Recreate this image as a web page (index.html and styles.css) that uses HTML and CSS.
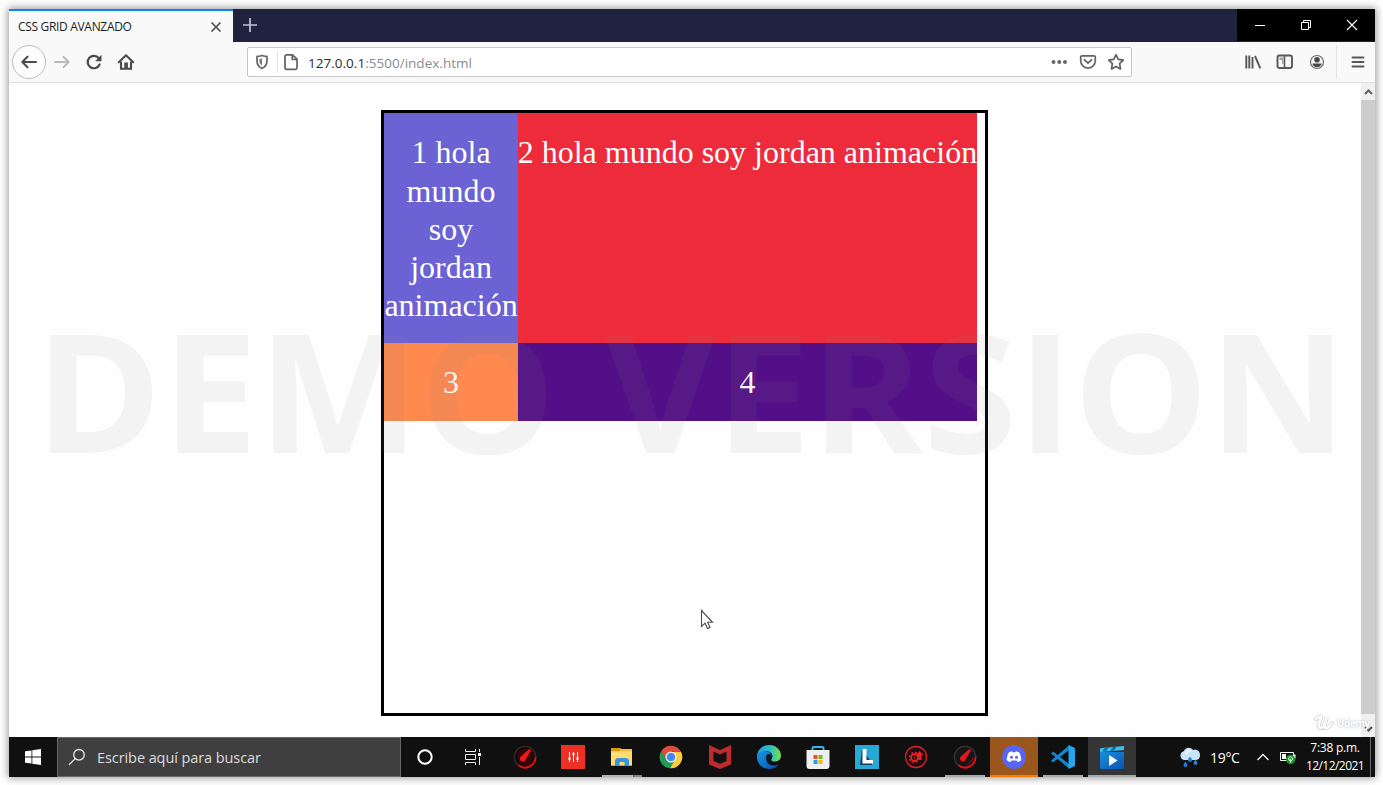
FILE: index.html
```html
<!DOCTYPE html>
<html lang="es">
<head>
<meta charset="utf-8">
<title>CSS GRID AVANZADO</title>
<link rel="stylesheet" href="styles.css">
</head>
<body>
<div class="screen">
  <header class="tabbar">
    <div class="tab">
      <span class="tab-title">CSS GRID AVANZADO</span>
      <svg class="tab-close" width="12" height="12" viewBox="0 0 12 12"><path d="M1.500 1.500l9 9M10.500 1.500l-9 9" stroke="#4a4a4c" stroke-width="1.600" fill="none"/></svg>
    </div>
    <svg class="tab-new" width="16" height="16" viewBox="0 0 16 16"><path d="M8 1v14M1 8h14" stroke="#c4c4d4" stroke-width="1.700"/></svg>
    <div class="controls">
      <svg width="46" height="32" viewBox="0 0 46 32"><path d="M18 16.500h10" stroke="#fff"/></svg>
      <svg width="46" height="32" viewBox="0 0 46 32"><path d="M18.500 13.500h7v7h-7zM20.500 13.500v-2h7v7h-2" stroke="#fff" fill="none"/></svg>
      <svg width="46" height="32" viewBox="0 0 46 32"><path d="M18 11l10 10M28 11l-10 10" stroke="#fff" stroke-width="1.100"/></svg>
    </div>
  </header>

  <nav class="toolbar">
    <div class="nav-buttons">
      <svg width="36" height="36" viewBox="0 0 36 36"><circle cx="18" cy="18" r="16.500" fill="#fdfdfd" stroke="#bdbdbe"/><path d="M25 18H11.500M16.500 12.800L11.300 18l5.200 5.200" fill="none" stroke="#4a4a4e" stroke-width="2" stroke-linecap="round" stroke-linejoin="round"/></svg>
      <svg class="forward" width="18" height="18" viewBox="0 0 18 18"><path d="M2 9h13.500M10.500 3.800L15.700 9l-5.200 5.200" fill="none" stroke="#b9b9bb" stroke-width="1.900" stroke-linecap="round" stroke-linejoin="round"/></svg>
      <svg class="reload" width="18" height="18" viewBox="0 0 18 18"><path d="M13.800 5.200A6.200 6.200 0 1 0 14.600 11.500" fill="none" stroke="#4a4a4e" stroke-width="2.200" stroke-linecap="round"/><path d="M16.500 1.800v6.400H10.100z" fill="#4a4a4e"/></svg>
      <svg class="home" width="18" height="18" viewBox="0 0 18 18"><path d="M1.800 9.200L9 2.200l7.200 7" fill="none" stroke="#4a4a4e" stroke-width="2" stroke-linecap="round" stroke-linejoin="round"/><path d="M4 8.500v7.200h10V8.500" fill="none" stroke="#4a4a4e" stroke-width="2.100"/><path d="M7.300 9.500h3.600V16H7.300z" fill="#4a4a4e"/></svg>
    </div>
    <div class="urlbar">
      <svg class="shield" width="14" height="16" viewBox="0 0 14 16"><path d="M7 1.500c2 .8 3.700 1 5 1v4.200c0 3.800-2 6.300-5 7.600-3-1.300-5-3.800-5-7.600V2.500c1.300 0 3-.2 5-1z" fill="none" stroke="#6a6a6d" stroke-width="1.800" stroke-linejoin="round"/><path d="M7 4.500v7C5.500 10.500 4.500 9 4.500 7V5z" fill="#77777a"/></svg>
      <span class="url-sep"></span>
      <svg class="page-icon" width="14" height="18" viewBox="0 0 14 18"><path d="M3 1.800h5.500L13 6.200v8.600a1.600 1.600 0 0 1-1.600 1.600H2.600A1.600 1.600 0 0 1 1 14.800V3.400a1.600 1.600 0 0 1 1.600-1.600zM8.300 2v4.500H13" fill="none" stroke="#626265" stroke-width="1.700" stroke-linejoin="round"/></svg>
      <span class="url"><b>127.0.0.1</b>:5500/index.html</span>
      <svg class="dots" width="18" height="6" viewBox="0 0 18 6"><g fill="#68686b"><circle cx="3.500" cy="3" r="2"/><circle cx="9.300" cy="3" r="2"/><circle cx="15" cy="3" r="2"/></g></svg>
      <svg class="pocket" width="18" height="16" viewBox="0 0 18 16"><path d="M3 1.800h12a1.300 1.300 0 0 1 1.300 1.300v3.700a7.300 7.300 0 0 1-14.600 0V3.100A1.300 1.300 0 0 1 3 1.800z" fill="none" stroke="#626265" stroke-width="1.700"/><path d="M5.500 5.800L9 9.200l3.500-3.400" fill="none" stroke="#626265" stroke-width="1.800" stroke-linecap="round" stroke-linejoin="round"/></svg>
      <svg class="star" width="18" height="18" viewBox="0 0 18 18"><path d="M9 1.700l2.200 4.700 5.100.7-3.700 3.600.9 5.200L9 13.400l-4.500 2.500.9-5.200-3.700-3.600 5.100-.7z" fill="none" stroke="#626265" stroke-width="1.700" stroke-linejoin="round"/></svg>
    </div>
    <div class="tools">
      <svg width="18" height="18" viewBox="0 0 18 18"><path d="M2.300 2.500v13M5.300 2.500v13M8.500 4v11.500M11 3l5.300 12.300" fill="none" stroke="#58585b" stroke-width="1.900"/></svg>
      <svg width="18" height="18" viewBox="0 0 18 18"><rect x="1.500" y="2.500" width="14.500" height="12.500" rx="2" fill="none" stroke="#58585b" stroke-width="1.900"/><path d="M8.500 3v11.500" stroke="#58585b" stroke-width="1.600"/><path d="M3.500 4.500h4V11H6V7H3.500z" fill="#a2a2a4"/></svg>
      <svg width="18" height="18" viewBox="0 0 18 18"><circle cx="9" cy="9" r="6.500" fill="#fafafa" stroke="#68686b" stroke-width="1.200"/><circle cx="9" cy="6.800" r="2.800" fill="#48484b"/><path d="M4.200 10.600h9.600c-.6 2.500-2.500 3.600-4.800 3.600s-4.200-1.100-4.800-3.600z" fill="#48484b"/></svg>
    </div>
    <span class="tool-sep"></span>
    <svg class="menu" width="14" height="14" viewBox="0 0 14 14"><path d="M1.500 2.500h11M1.500 7h11M1.500 11.500h11" stroke="#58585b" stroke-width="1.900" stroke-linecap="round"/></svg>
  </nav>

  <main class="viewport">
    <div class="page">
      <section class="grid">
        <div class="cell cell-1">1 hola mundo soy jordan animación</div>
        <div class="cell cell-2">2 hola mundo soy jordan animación</div>
        <div class="cell cell-3">3</div>
        <div class="cell cell-4">4</div>
      </section>
    </div>
    <div class="scrollbar">
      <svg width="14" height="17" viewBox="0 0 14 17"><path d="M4 11l3.500-3.500L11 11" fill="none" stroke="#606060" stroke-width="2"/></svg>
      <div class="thumb"></div>
      <svg width="14" height="23" viewBox="0 0 14 23"><path d="M4 13l3.500 3.500L11 13" fill="none" stroke="#505050" stroke-width="2"/></svg>
    </div>
  </main>

  <footer class="taskbar">
    <div class="start"><svg width="16" height="16" viewBox="0 0 16 16"><path d="M0 2.300l6.500-.9v6.100H0zM7.300 1.200L16 0v7.500H7.300zM0 8.400h6.500v6.200L0 13.700zM7.300 8.400H16V16l-8.700-1.200z" fill="#fff"/></svg></div>
    <div class="search">
      <svg width="18" height="18" viewBox="0 0 18 18"><circle cx="11" cy="6.800" r="5.300" fill="none" stroke="#e8e8e8" stroke-width="1.300"/><path d="M7.200 10.600L1 16.800" stroke="#e8e8e8" stroke-width="1.300"/></svg>
      <span>Escribe aquí para buscar</span>
    </div>
    <div class="task"><svg width="24" height="24" viewBox="0 0 24 24"><circle cx="12" cy="12" r="6.700" fill="none" stroke="#fff" stroke-width="2"/></svg></div>
    <div class="task view"><svg width="24" height="24" viewBox="0 0 24 24"><path d="M4.500 4v2.500h10V4M4.500 20v-2.500h10V20M4.500 9.500h10v5h-10zM18.500 4v3M18.500 12v8" fill="none" stroke="#eee"/><path d="M17 8h3v3h-3z" fill="#fff"/></svg></div>
    <div class="task gauge"><svg width="24" height="24" viewBox="0 0 24 24"><circle cx="12" cy="12" r="10.700" fill="#190405" stroke="#303032" stroke-width="1.300"/><circle cx="12.500" cy="12" r="8.500" fill="#320506"/><path d="M22.500 12a10.500 10.500 0 0 1-17 8.300" fill="none" stroke="#e10d13" stroke-width="2"/><path d="M16.300 4l1.800 1.300-5.200 8.700a3 3 0 1 1-4.500-3z" fill="#f3171c"/></svg></div>
    <div class="task"><svg width="24" height="24" viewBox="0 0 24 24"><path d="M0 0h24v24H0z" fill="#ee3026"/><path d="M8.500 7v10M12.500 7v10M16.500 7v10" stroke="#fff"/><path d="M7.500 12h2v3h-2zM11.500 8h2v2h-2zM15.500 12h2v3h-2z" fill="#fff"/></svg></div>
    <div class="task open split"><svg width="24" height="24" viewBox="0 0 24 24"><path d="M1 3h9l1.500 1H22v16.500H1z" fill="#f4bd3c"/><path d="M1 3h9v3H1z" fill="#d99911"/><path d="M1 6.500h21V20.500H1z" fill="#ffdc72"/><path d="M5 21v-6l2-2h10l2 2v6h-4.500v-4h-5v4z" fill="#3895df"/></svg></div>
    <div class="task"><svg width="24" height="24" viewBox="0 0 24 24"><path d="M2.100 6.300A11.300 11.300 0 0 0 11 23.250L15.300 16z" fill="#239b57"/><path d="M21.900 6.600A11.300 11.300 0 0 1 11 23.250l6-10.250L14 6.600z" fill="#fdcc3c"/><path d="M2.200 6.200L7 14l5-7.500h9.800A11.300 11.300 0 0 0 2.200 6.200z" fill="#df4b3c"/><circle cx="12" cy="12" r="5.500" fill="#f7f7f7"/><circle cx="12" cy="12" r="4.300" fill="#4688f1"/></svg></div>
    <div class="task"><svg width="24" height="24" viewBox="0 0 24 24"><path d="M1 0l11 5 11-5v19.500L12 24 1 19.500z" fill="#bd2b2d"/><path d="M5.500 6.500L12 9.500l6.500-3V16L12 18.800 5.500 16z" fill="#111"/></svg></div>
    <div class="task"><svg width="24" height="24" viewBox="0 0 24 24"><defs><linearGradient id="eg" x2="1"><stop stop-color="#239fe1"/><stop offset=".5" stop-color="#27bfd0"/><stop offset="1" stop-color="#78dc49"/></linearGradient><linearGradient id="eb" x2="1" y2="1"><stop stop-color="#1699e4"/><stop offset="1" stop-color="#0b4bab"/></linearGradient></defs><path d="M0 12C0 5 5.400 0 12 0c7 0 12 5 12 10.500 0 4-3 6-6 6-4 0-4.500-1.500-3-3 2-5-3-9-8.500-7C3 7.500.7 9.500 0 12z" fill="url(#eg)"/><path d="M0 12C1 7 5 5 9 6c4 .8 6 3.500 6 6.500-1-3-5.500-2-5.500 2 0 5 6 8 12.500 4.500C19.500 22.500 16 24 12 24 5.500 24 0 19 0 12z" fill="url(#eb)"/><path d="M15 12.500c0-4-5-5-6-1s3 8.500 8 8c2 0 4-.8 5-1.500-3 1.500-7 1-9-1-1-1.500 1-2.500 2-4.500z" fill="#101820"/></svg></div>
    <div class="task"><svg width="24" height="24" viewBox="0 0 24 24"><path d="M6.500 6V3.200A1.200 1.200 0 0 1 7.700 2h8.600a1.200 1.200 0 0 1 1.200 1.200V6" fill="none" stroke="#35b7ee" stroke-width="2"/><path d="M.5 5h23v16a3 3 0 0 1-3 3h-17a3 3 0 0 1-3-3z" fill="#efefef"/><path d="M7.500 10h4v4h-4z" fill="#ed5026"/><path d="M12.500 10h4v4h-4z" fill="#7aba24"/><path d="M7.500 15h4v4h-4z" fill="#16a4eb"/><path d="M12.500 15h4v4h-4z" fill="#fbb70c"/></svg></div>
    <div class="task"><svg width="24" height="24" viewBox="0 0 24 24"><path d="M0 0h24v24H0z" fill="#27a9d8"/><path d="M7 4L5 20h12v-2z" fill="#143d62"/><path d="M7.500 4h4v11H18v3.500H7.500z" fill="#fff"/></svg></div>
    <div class="task"><svg width="24" height="24" viewBox="0 0 24 24"><circle cx="12" cy="12" r="10.500" fill="#1c0e10" stroke="#da1f27" stroke-width="1.300"/><g fill="none" stroke="#ed2028"><circle cx="10.500" cy="12.500" r="3.400" stroke-width="1.800"/><circle cx="10.500" cy="12.500" r="4.900" stroke-width="1.600" stroke-dasharray="1.900 1.950"/><circle cx="10.500" cy="12.500" r=".6"/></g><path d="M15.500 6l4 4h-2v5h-3v-5h-2z" fill="#ed2028"/></svg></div>
    <div class="task open"><svg width="24" height="24" viewBox="0 0 24 24"><circle cx="12" cy="12" r="10.700" fill="#171415" stroke="#353536" stroke-width="1.300"/><path d="M22.500 12a10.500 10.500 0 0 1-17 8.300" fill="none" stroke="#e10d13" stroke-width="2"/><path d="M19.500 12a7.500 7.500 0 0 1-5 7" fill="none" stroke="#711012" stroke-width="1.300"/><path d="M16.300 4l1.800 1.300-5.200 8.700a3 3 0 1 1-4.500-3z" fill="#e3171c"/></svg></div>
    <div class="task alert"><svg width="24" height="24" viewBox="0 0 24 24"><circle cx="12" cy="12" r="12" fill="#5865f2"/><path d="M7 7.200l3-1 .6 1.100h2.800l.6-1.100 3 1c1.700 2.600 2.300 5.300 2.200 8-1.200 1-2.400 1.600-3.600 1.900l-1-1.600H9.400l-1 1.600c-1.200-.3-2.400-.9-3.600-1.900-.1-2.700.5-5.400 2.200-8z" fill="#fff"/><circle cx="9.500" cy="12.300" r="1.500" fill="#5865f2"/><circle cx="14.500" cy="12.300" r="1.500" fill="#5865f2"/></svg></div>
    <div class="task open"><svg width="24" height="24" viewBox="0 0 24 24"><path d="M0 8.300l2-1.800L18 19v4.500z" fill="#1685ca"/><path d="M0 15.700l2 1.800L18 5V.5z" fill="#1089d5"/><path d="M17.500 0L24 3v18l-6.500 3z" fill="#26a5ed"/></svg></div>
    <div class="task active"><svg width="24" height="24" viewBox="0 0 24 24"><defs><linearGradient id="mv" x2="1" y2="1"><stop stop-color="#1d91da"/><stop offset="1" stop-color="#0753b8"/></linearGradient></defs><path d="M0 7h24v15.500a1.500 1.500 0 0 1-1.500 1.500h-21A1.500 1.500 0 0 1 0 22.500z" fill="url(#mv)"/><path d="M0 3.200L24 1v4L0 7z" fill="#38c1ed"/><path d="M5 2.700l4-.4-3 4-4 .3zM13 2l4-.4-3 4-4 .4z" fill="#126fae"/><path d="M9 10l8.500 5.500L9 21z" fill="#fff"/></svg></div>
    <div class="tray">
      <svg class="weather" width="22" height="22" viewBox="0 0 22 22"><path d="M5 14a4.500 4.500 0 0 1-.3-8.700C6 1.800 11 0 14 4c4-.7 7 1.200 7 5s-2 5-5 5z" fill="#c9e5fb"/><path d="M5.500 7c2-4 6-4 8-1.500C10 5 8 7 7.500 9z" fill="#f1f8ff"/><path d="M6.500 15.500q4 5 0 5.500-4-.5 0-5.500M11 10.500q4 5 0 5.500-4-.5 0-5.500M16.500 13.500q4 5 0 5.500-4-.5 0-5.500" fill="#2380da"/></svg>
      <span class="temp">19°C</span>
      <svg class="chevron" width="14" height="8" viewBox="0 0 14 8"><path d="M1.500 7L7 1.500 12.500 7" fill="none" stroke="#f2f2f2" stroke-width="1.300"/></svg>
      <svg class="battery" width="17" height="15" viewBox="0 0 17 15"><path d="M1.500 2.500h13v8h-13z" fill="none" stroke="#fff"/><path d="M3 4h4v5H3zM15 4.500h1.500v4H15z" fill="#fff"/><circle cx="11.500" cy="9.500" r="4.700" fill="#149b28"/><path d="M11.500 12.500V9M9.500 9.700c0-1.700 1-2.700 2-3.200 1 .5 2 1.500 2 3.200l-2 1.300z" stroke="#fff" fill="none"/></svg>
      <div class="clock"><span class="time">7:38 p.m.</span><span class="date">12/12/2021</span></div>
      <span class="desktop-edge"></span>
    </div>
  </footer>
</div>

<svg class="watermark" width="1383" height="180" viewBox="0 0 1383 180">
  <text x="35" y="143" textLength="521" lengthAdjust="spacingAndGlyphs">DEMO</text>
  <text x="605" y="143" textLength="742" lengthAdjust="spacingAndGlyphs">VERSION</text>
</svg>
<svg class="cursor" width="14" height="22" viewBox="0 0 14 22"><path d="M1.500 1.500v16l3.700-3.300 2.300 5.300 2.500-1-2.300-5.200h4.800z" fill="#fff" stroke="#4c4c50" stroke-width="1.100"/></svg>
<div class="brand">
  <svg width="20" height="18" viewBox="0 0 20 18"><path d="M2 5c4-3 6-4 5-1s-4 9-1 10 5-4 7-11c-2 6-4 11-1 11 2 0 4-2 6-5" fill="none" stroke="#d2d2d2" stroke-width="4" stroke-linecap="round"/><path d="M2 5c4-3 6-4 5-1s-4 9-1 10 5-4 7-11c-2 6-4 11-1 11 2 0 4-2 6-5" fill="none" stroke="#fff" stroke-width="2.400" stroke-linecap="round"/></svg>
  <span>Udemy</span>
</div>
</body>
</html>
```
FILE: styles.css
```css
* { box-sizing: border-box; }

body {
  margin: 0;
  padding: 9px 8px 8px 9px;
  width: 1383px;
  height: 785px;
  overflow: hidden;
  position: relative;
  background: #fff;
  font-family: "Open Sans", "Noto Sans", sans-serif;
}

svg { display: block; flex: none; }

.screen {
  display: flex;
  flex-direction: column;
  width: 1366px;
  height: 768px;
  box-shadow: 0 0 8px 1px rgba(0, 0, 0, .42);
}

/* Tab bar */
.tabbar {
  display: flex;
  height: 33px;
  background: #202340;
}

.tab {
  display: flex;
  align-items: center;
  justify-content: space-between;
  width: 224px;
  padding: 0 11px 0 9px;
  border-top: 2px solid #0a84ff;
  background: #f9f9fa;
}

.tab-title {
  font-size: 12px;
  line-height: 16px;
  letter-spacing: -.32px;
  color: #1c1c20;
  white-space: nowrap;
}

.tab-new { margin: 8px 0 0 9px; }

.controls {
  display: flex;
  height: 32px;
  margin-left: auto;
  background: #000;
}

/* Navigation toolbar */
.toolbar {
  display: flex;
  align-items: center;
  height: 41px;
  background: #f9f9fa;
  border-bottom: 1px solid #e0e0e1;
}

.nav-buttons {
  display: flex;
  align-items: center;
  width: 238px;
  padding-left: 2px;
}

.forward { margin-left: 6px; }
.reload { margin-left: 14px; }
.home { margin-left: 14px; }

.urlbar {
  display: flex;
  align-items: center;
  width: 885px;
  height: 30px;
  padding: 0 6px 0 7px;
  border: 1px solid #c6c6c7;
  border-radius: 2px;
  background: #fff;
}

.url-sep {
  width: 1px;
  height: 22px;
  margin: 0 6px 0 8px;
  background: #e4e4e5;
}

.url {
  margin: 2px auto 0 10px;
  font-size: 13.500px;
  letter-spacing: .02px;
  color: #8c8c8f;
}

.url b { font-weight: 400; color: #2c2c30; }
.pocket { margin-left: 11px; }
.star { margin-left: 10px; }

.tools {
  display: flex;
  gap: 14px;
  margin-left: 112px;
}

.tool-sep {
  width: 1px;
  height: 34px;
  margin-left: 10px;
  background: #e4e4e5;
}

.menu { margin-left: 14px; }

/* Page viewport */
.viewport {
  display: flex;
  height: 654px;
  background: #fefefe;
}

.page { width: 1352px; padding-top: 27px; }

.grid {
  display: grid;
  grid-template-columns: min-content max-content;
  grid-template-rows: 230px 78px;
  width: 606.500px;
  height: 606px;
  margin-left: 372.400px;
  border: 3px solid #000;
}

.cell {
  padding: 20.300px 0 0;
  font: 32px/38.200px "Liberation Serif", serif;
  text-align: center;
  color: #fff;
}

.cell-1 { background: #6b62d3; }
.cell-2 { background: #ee2b3b; white-space: nowrap; }
.cell-3 { background: #ff894f; }
.cell-4 { background: #520f87; }

.scrollbar {
  display: flex;
  flex-direction: column;
  width: 14px;
  background: #f0f0f0;
}

.thumb { flex: 1; background: #cdcdcd; }

/* Taskbar */
.taskbar {
  display: flex;
  height: 40px;
  background: #101010;
}

.start {
  display: grid;
  place-items: center;
  width: 48px;
}

.search {
  display: flex;
  align-items: center;
  gap: 11px;
  width: 344px;
  padding-left: 10px;
  border: 1px solid #686868;
  background: #3f3f3f;
  font-size: 14.500px;
  letter-spacing: -.08px;
  color: #dcdcdc;
}

.task {
  display: grid;
  place-items: center;
  width: 48px;
  margin-right: 1px;
}

.task:nth-child(3) { margin-right: 0; }
.view { margin-right: 3px; }
.gauge { padding-left: 2px; }

.open { background: linear-gradient(#aaa, #aaa) 50% 100% / 40px 2px no-repeat; }
.split { background: linear-gradient(90deg, #b4b4b4 31px, #5a5a5a 31px, #5a5a5a 32px, #858585 32px) 50% 100% / 40px 2px no-repeat; }
.alert { background: linear-gradient(#ff7900, #ff7900) 0 100% / 100% 2px no-repeat #9b561c; }
.active { background: linear-gradient(#aaa, #aaa) 0 100% / 100% 2px no-repeat #353535; }

.tray {
  display: flex;
  align-items: center;
  margin-left: auto;
  color: #fff;
}

.temp {
  width: 34px;
  margin-left: 9px;
  font-size: 14px;
  letter-spacing: -.3px;
}

.chevron { margin-left: 12px; }
.battery { margin-left: 9px; }

.clock {
  display: flex;
  flex-direction: column;
  align-items: center;
  width: 60px;
  margin-left: 9px;
  font-size: 12px;
  line-height: 18px;
  white-space: nowrap;
}

.time { letter-spacing: -.25px; }
.date { letter-spacing: -.55px; }

.desktop-edge {
  align-self: stretch;
  width: 1px;
  margin: 0 4px 0 5px;
  background: #686868;
}

/* Layers over the screen */
.watermark {
  position: absolute;
  left: 0;
  top: 310px;
  pointer-events: none;
}

.watermark text {
  font: 700 166px "Open Sans", sans-serif;
  fill: rgba(128, 128, 128, .09);
}

.cursor { position: absolute; left: 700px; top: 609px; }

.brand {
  position: absolute;
  left: 1314px;
  top: 714px;
  display: flex;
  align-items: center;
  gap: 3px;
  font-weight: 700;
  font-size: 10px;
  line-height: 16px;
  letter-spacing: -.5px;
  color: #fff;
  text-shadow: 0 0 2px #aaa;
}
```
